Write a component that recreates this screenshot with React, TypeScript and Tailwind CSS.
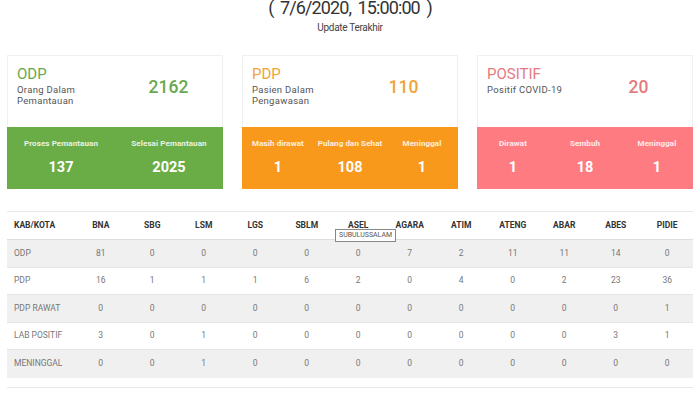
import React from "react";

const cols = ["BNA","SBG","LSM","LGS","SBLM","ASEL","AGARA","ATIM","ATENG","ABAR","ABES","PIDIE"];
const rows: [string, number[]][] = [
  ["ODP", [81,0,0,0,0,0,7,2,11,11,14,0]],
  ["PDP", [16,1,1,1,6,2,0,4,0,2,23,36]],
  ["PDP RAWAT", [0,0,0,0,0,0,0,0,0,0,0,1]],
  ["LAB POSITIF", [3,0,1,0,0,0,0,0,0,0,3,1]],
  ["MENINGGAL", [0,0,1,0,0,0,0,0,0,0,0,0]],
];

function Card({ title, sub, total, titleCls, bg, items }: { title: string; sub: string[]; total: string; titleCls: string; bg: string; items: [string, string][] }) {
  return (
    <div className="flex flex-col">
      <div className="h-[72px] border border-[#eef0f2] border-b-0 bg-white flex">
        <div className="w-1/2 pl-[9px] pt-[9px]">
          <div className={"text-[15px] leading-[18px] " + titleCls}>{title}</div>
          <div className="mt-[2px] text-[9.5px] leading-[10.5px] tracking-[0.3px] text-[#555]">
            {sub.map((s) => (<div key={s}>{s}</div>))}
          </div>
        </div>
        <div className="w-1/2 flex justify-center pt-[21px]">
          <div className={"text-[17.5px] leading-[20px] font-medium " + titleCls}>{total}</div>
        </div>
      </div>
      <div className={"h-[62px] flex " + bg}>
        {items.map(([l, v]) => (
          <div key={l} className="flex-1 flex flex-col items-center pt-[12px]">
            <div className="text-[8px] leading-[10px] font-bold text-white/85 tracking-[0.1px]">{l}</div>
            <div className="mt-[11px] text-[14.5px] leading-[16px] font-bold text-white">{v}</div>
          </div>
        ))}
      </div>
    </div>
  );
}

export default function App() {
  return (
    <div className="w-[700px] h-[393px] overflow-hidden bg-white" style={{ fontFamily: "Roboto, 'Liberation Sans', sans-serif" }}>
      <div className="text-center text-[18px] leading-[18px] tracking-[-0.9px] [word-spacing:3px] text-[#333] -mt-[1px]">( 7/6/2020, 15:00:00 )</div>
      <div className="text-center text-[10px] leading-[12px] tracking-[-0.3px] text-[#444] mt-[5px]">Update Terakhir</div>
      <div className="grid grid-cols-3 gap-[19px] px-[7px] mt-[21px]">
        <Card title="ODP" sub={["Orang Dalam", "Pemantauan"]} total="2162" titleCls="text-[#6aa84f]" bg="bg-[#6aac46]"
          items={[["Proses Pemantauan", "137"], ["Selesai Pemantauan", "2025"]]} />
        <Card title="PDP" sub={["Pasien Dalam", "Pengawasan"]} total="110" titleCls="text-[#f0a43a]" bg="bg-[#f8991c]"
          items={[["Masih dirawat", "1"], ["Pulang dan Sehat", "108"], ["Meninggal", "1"]]} />
        <Card title="POSITIF" sub={["Positif COVID-19"]} total="20" titleCls="text-[#e57a7f]" bg="bg-[#fe7b81]"
          items={[["Dirawat", "1"], ["Sembuh", "18"], ["Meninggal", "1"]]} />
      </div>
      <div className="relative mx-[7px] mt-[22px] border-t border-[#e8e8e8] pb-[9px] border-b">
        <div className="flex h-[28px] items-center border-b border-[#dedede] bg-white text-[8.5px] font-bold text-[#333]">
          <div className="w-[68px] pl-[7px]">KAB/KOTA</div>
          {cols.map((c) => (<div key={c} className="flex-1 text-center">{c}</div>))}
        </div>
        {rows.map(([name, vals], i) => (
          <div key={name} className={"flex h-[27.5px] items-center text-[8.5px] text-[#777] " + (i < rows.length - 1 ? "border-b border-[#e4e4e4] " : "") + (i % 2 === 0 ? "bg-[#f0f0f0]" : "bg-white")}>
            <div className="w-[68px] pl-[7px]">{name}</div>
            {vals.map((v, j) => (<div key={j} className="flex-1 text-center">{v}</div>))}
          </div>
        ))}
        <div className="absolute left-[328px] top-[17px] h-[13px] px-[3px] border border-[#888] bg-white text-[7px] leading-[11px] text-[#555]">SUBULUSSALAM</div>
      </div>
    </div>
  );
}
